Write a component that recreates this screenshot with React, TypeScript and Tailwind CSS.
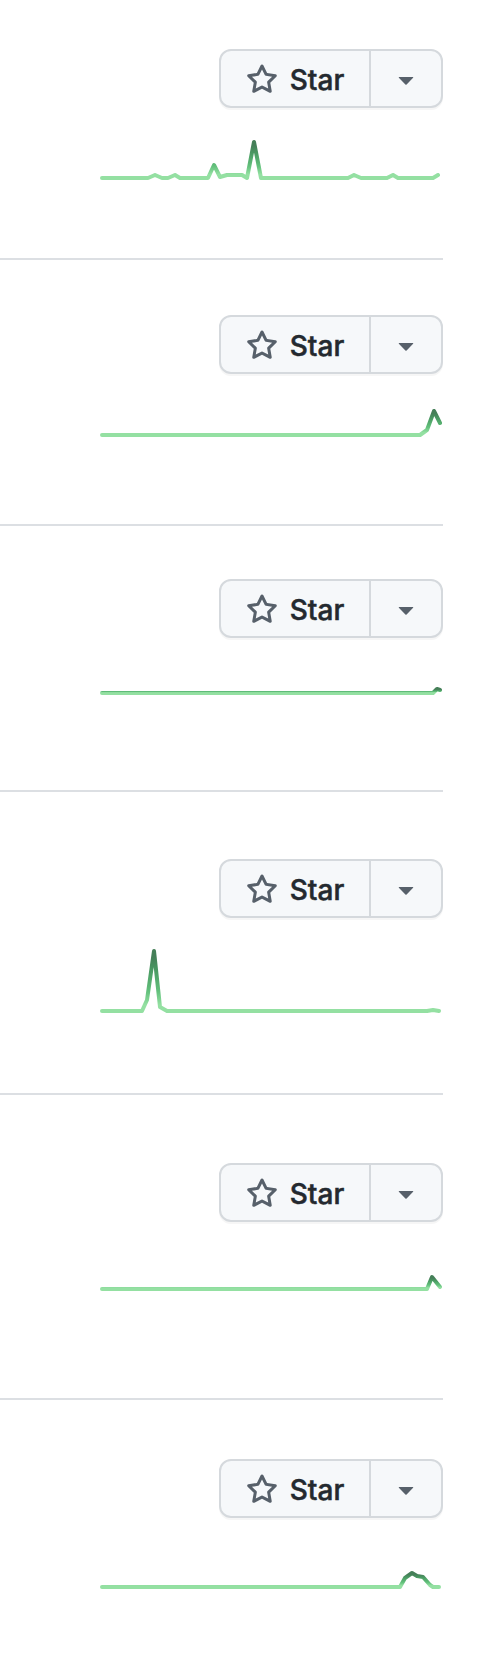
import { useId } from 'react'

type Pt = [number, number]

interface Row {
    pad: string
    h: number
    pts: Pt[]
    last?: boolean
}

// x is page x, second value is rise above the baseline
const rows: Row[] = [
    {
        pad: 'pt-[49px] pb-[76px]',
        h: 74,
        pts: [[102, 0], [148, 0], [155, 3], [162, 0], [168, 0], [175, 3], [180, 0], [208, 0], [214, 13], [220, 1], [227, 3], [242, 3], [247, 0], [254, 36], [261, 0], [348, 0], [354, 3], [361, 0], [387, 0], [393, 3], [398, 0], [433, 0], [438, 3]],
    },
    {
        pad: 'pt-[55px] pb-[85px]',
        h: 65,
        pts: [[102, 0], [420, 0], [427, 5], [434, 24], [440, 12]],
    },
    {
        pad: 'pt-[53px] pb-[93px]',
        h: 59,
        pts: [[102, 0], [433, 0], [437, 4], [440, 3]],
    },
    {
        pad: 'pt-[67px] pb-[78px]',
        h: 97,
        pts: [[102, 0], [142, 0], [147, 11], [154, 60], [160, 4], [167, 0], [427, 0], [433, 1], [439, 0]],
    },
    {
        pad: 'pt-[68px] pb-[105px]',
        h: 71,
        pts: [[102, 0], [427, 0], [432, 12], [440, 2]],
    },
    {
        pad: 'pt-[59px] pb-[81px]',
        h: 73,
        pts: [[102, 0], [400, 0], [405, 9], [412, 14], [417, 11], [423, 10], [430, 2], [433, 0], [439, 0]],
        last: true,
    },
]

function StarIcon() {
    return (
        <svg viewBox="0 0 16 16" width="32" height="32" fill="#57606a">
            <path d="M8 .25a.75.75 0 0 1 .673.418l1.882 3.815 4.21.612a.75.75 0 0 1 .416 1.279l-3.046 2.97.719 4.192a.751.751 0 0 1-1.088.791L8 12.347l-3.766 1.98a.75.75 0 0 1-1.088-.79l.72-4.194L.818 6.374a.75.75 0 0 1 .416-1.28l4.21-.611L7.327.668A.75.75 0 0 1 8 .25Zm0 2.445L6.615 5.5a.75.75 0 0 1-.564.41l-3.097.45 2.24 2.184a.75.75 0 0 1 .216.664l-.528 3.084 2.769-1.456a.75.75 0 0 1 .698 0l2.77 1.456-.53-3.084a.75.75 0 0 1 .216-.664l2.24-2.183-3.096-.45a.75.75 0 0 1-.564-.41L8 2.694Z" />
        </svg>
    )
}

function CaretIcon() {
    return (
        <svg viewBox="0 0 16 16" width="32" height="32" fill="#57606a">
            <path d="m4.427 7.427 3.396 3.396a.25.25 0 0 0 .354 0l3.396-3.396A.25.25 0 0 0 11.396 7H4.604a.25.25 0 0 0-.177.427Z" />
        </svg>
    )
}

function StarButton() {
    return (
        <div className="flex h-[59px] w-[224px] rounded-[12px] border-2 border-[#d5d9dd] bg-[#f6f8fa] shadow-[0_2px_0_rgba(27,31,36,0.04)]">
            <div className="flex w-[148px] items-center justify-center gap-[12px] pt-[2px]">
                <StarIcon />
                <span className="text-[28px] font-medium leading-none text-[#24292f] [-webkit-text-stroke:0.5px_#24292f]">Star</span>
            </div>
            <div className="flex flex-1 items-center justify-center border-l-2 border-[#d5d9dd]">
                <CaretIcon />
            </div>
        </div>
    )
}

function Sparkline({ h, pts }: { h: number; pts: Pt[] }) {
    const id = useId().replace(/:/g, '')
    const base = h - 4
    const points = pts.map(([x, r]) => `${x},${base - r}`).join(' ')

    return (
        <svg width="443" height={h} className="block">
            <defs>
                <linearGradient id={id} x1="0" x2="0" y1="1" y2="0">
                    <stop offset="10%" stopColor="#94e0a2" />
                    <stop offset="33%" stopColor="#62c07b" />
                    <stop offset="66%" stopColor="#4b9c64" />
                    <stop offset="90%" stopColor="#457f58" />
                </linearGradient>
            </defs>
            <polyline
                points={points}
                fill="none"
                stroke={`url(#${id})`}
                strokeWidth="4"
                strokeLinejoin="round"
                strokeLinecap="round"
            />
        </svg>
    )
}

export default function App() {
    return (
        <div className="min-h-[1672px] bg-white font-['Inter','Liberation_Sans',sans-serif]">
            <div className="w-[443px]">
                {rows.map((row, i) => (
                    <div
                        key={i}
                        className={`flex flex-col items-end ${row.pad} ${row.last ? '' : 'border-b-2 border-[#dcdfe3]'}`}
                    >
                        <StarButton />
                        <Sparkline h={row.h} pts={row.pts} />
                    </div>
                ))}
            </div>
        </div>
    )
}
